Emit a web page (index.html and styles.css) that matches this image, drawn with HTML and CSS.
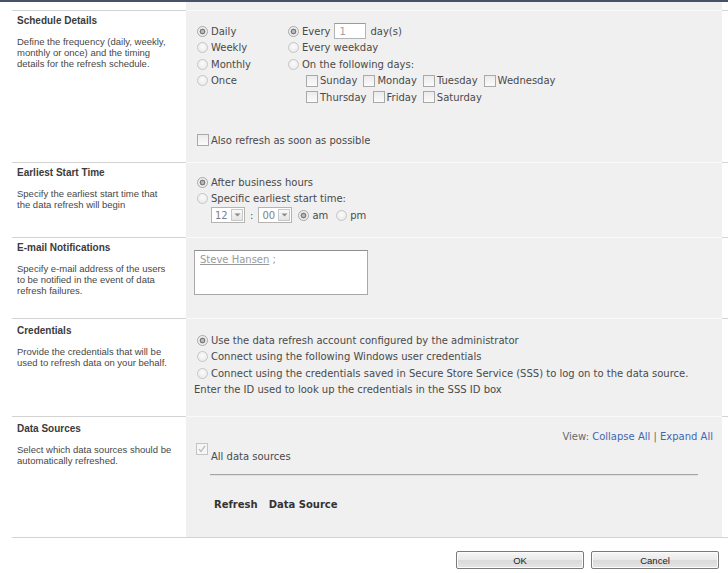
FILE: index.html
```html
<!DOCTYPE html>
<html>
<head>
<meta charset="utf-8">
<title>Refresh Schedule</title>
<link rel="stylesheet" href="styles.css">
</head>
<body>
<div class="topbar"></div>
<div class="form">
  <div class="sec sec-top"><div class="left"></div><div class="right"></div><div class="edge"></div></div>

  <div class="sec s1">
    <div class="left">
      <div class="title">Schedule Details</div>
      <div class="desc">Define the frequency (daily, weekly,<br>monthly or once) and the timing<br>details for the refresh schedule.</div>
    </div>
    <div class="right">
      <div class="freq">
        <div class="colA">
          <div class="row"><span class="radio on"></span>Daily</div>
          <div class="row"><span class="radio"></span>Weekly</div>
          <div class="row"><span class="radio"></span>Monthly</div>
          <div class="row"><span class="radio"></span>Once</div>
        </div>
        <div class="colB">
          <div class="row"><span class="radio on"></span>Every<span class="num">1</span>day(s)</div>
          <div class="row"><span class="radio"></span>Every weekday</div>
          <div class="row"><span class="radio"></span>On the following days:</div>
          <div class="row days">
            <span class="day"><span class="cb"></span>Sunday</span>
            <span class="day"><span class="cb"></span>Monday</span>
            <span class="day"><span class="cb"></span>Tuesday</span>
            <span class="day"><span class="cb"></span>Wednesday</span>
          </div>
          <div class="row days">
            <span class="day"><span class="cb"></span>Thursday</span>
            <span class="day"><span class="cb"></span>Friday</span>
            <span class="day"><span class="cb"></span>Saturday</span>
          </div>
        </div>
      </div>
      <div class="row also"><span class="cb cb-l"></span>Also refresh as soon as possible</div>
    </div>
    <div class="edge"></div>
  </div>

  <div class="sec s2">
    <div class="left">
      <div class="title">Earliest Start Time</div>
      <div class="desc">Specify the earliest start time that<br>the data refresh will begin</div>
    </div>
    <div class="right">
      <div class="row"><span class="radio on"></span>After business hours</div>
      <div class="row"><span class="radio"></span>Specific earliest start time:</div>
      <div class="row time">
        <span class="sel"><span class="val">12</span><span class="drop"><svg width="7" height="4" viewBox="0 0 7 4"><path d="M0.5 0.5 L3.5 3.5 L6.5 0.5 Z" fill="#8a8a8a"/></svg></span></span>
        <span class="colon">:</span>
        <span class="sel"><span class="val">00</span><span class="drop"><svg width="7" height="4" viewBox="0 0 7 4"><path d="M0.5 0.5 L3.5 3.5 L6.5 0.5 Z" fill="#8a8a8a"/></svg></span></span>
        <span class="radio on"></span><span class="ampm">am</span>
        <span class="radio"></span><span class="ampm">pm</span>
      </div>
    </div>
    <div class="edge"></div>
  </div>

  <div class="sec s3">
    <div class="left">
      <div class="title">E-mail Notifications</div>
      <div class="desc">Specify e-mail address of the users<br>to be notified in the event of data<br>refresh failures.</div>
    </div>
    <div class="right">
      <div class="people"><span class="person">Steve Hansen</span> ;</div>
    </div>
    <div class="edge"></div>
  </div>

  <div class="sec s4">
    <div class="left">
      <div class="title">Credentials</div>
      <div class="desc">Provide the credentials that will be<br>used to refresh data on your behalf.</div>
    </div>
    <div class="right">
      <div class="row"><span class="radio on"></span>Use the data refresh account configured by the administrator</div>
      <div class="row"><span class="radio"></span>Connect using the following Windows user credentials</div>
      <div class="row"><span class="radio"></span>Connect using the credentials saved in Secure Store Service (SSS) to log on to the data source.</div>
      <div class="row plain">Enter the ID used to look up the credentials in the SSS ID box</div>
    </div>
    <div class="edge"></div>
  </div>

  <div class="sec s5">
    <div class="left">
      <div class="title">Data Sources</div>
      <div class="desc">Select which data sources should be<br>automatically refreshed.</div>
    </div>
    <div class="right">
      <div class="view">View: <a class="lnk">Collapse All</a> | <a class="lnk">Expand All</a></div>
      <div class="allds"><span class="cb cb-chk"><svg width="10" height="10" viewBox="0 0 10 10"><path d="M2 5.2 L4 7.5 L8 1.8" fill="none" stroke="#b8b8b8" stroke-width="1.2"/></svg></span><span class="alltxt">All data sources</span></div>
      <div class="rule"></div>
      <div class="heads"><span>Refresh</span><span>Data Source</span></div>
    </div>
    <div class="edge"></div>
  </div>

  <div class="foot">
    <button class="btn">OK</button>
    <button class="btn">Cancel</button>
  </div>
</div>
</body>
</html>
```

FILE: styles.css
```css
html, body {
  margin: 0;
  padding: 0;
  background: #ffffff;
}
body {
  font-family: "DejaVu Sans", Verdana, sans-serif;
  font-size: 10px;
  color: #4a4a4a;
}
.topbar {
  height: 2px;
  background: #465366;
}
.form {
  margin-left: 12px;
}
.sec {
  display: grid;
  grid-template-columns: 174px 536px 6px;
  box-sizing: border-box;
  border-top: 1px solid #d3d3d3;
}
.sec-top {
  height: 8px;
  border-top: none;
}
.s1 { height: 152px; }
.s2 { height: 75px; }
.s3 { height: 81px; }
.s4 { height: 98px; }
.s5 { height: 121px; }
.left {
  background: #ffffff;
  padding: 4px 0 0 5px;
  font-family: "Liberation Sans", Arial, sans-serif;
}
.s4 .left { padding-top: 6px; }
.s5 .left { padding-top: 6px; }
.right {
  background: #f0f0f0;
  border-top: 1px solid #fafafa;
  margin-top: -1px;
  padding: 0 9px 0 8px;
  box-sizing: border-box;
}
.sec-top .right { border-top: none; margin-top: 0; }
.edge { background: #ffffff; }
.title {
  font-weight: bold;
  font-size: 10px;
  line-height: 12px;
  color: #3b3b3b;
  margin-bottom: 9px;
}
.desc {
  font-size: 9.5px;
  line-height: 11px;
  color: #474747;
}
.row {
  height: 16.5px;
  display: flex;
  align-items: center;
  white-space: nowrap;
}
.radio {
  display: inline-block;
  box-sizing: border-box;
  width: 11px;
  height: 11px;
  border-radius: 50%;
  border: 1px solid #c6c6c6;
  background: radial-gradient(circle at 50% 40%, #fbfbfb 0, #e6e6e6 100%);
  margin: 0 3px;
  flex: none;
}
.radio.on {
  border-color: #a9a9a9;
  background: radial-gradient(circle, #b9b9b9 0, #b9b9b9 1.3px, #7b7b7b 1.8px, #7b7b7b 2.6px, #ececec 3.2px, #f4f4f4 100%);
}
.cb {
  display: inline-block;
  box-sizing: border-box;
  width: 12px;
  height: 12px;
  border: 1px solid #a9a9a9;
  background: linear-gradient(#ebebeb, #fbfbfb);
  margin-right: 2px;
  flex: none;
}
.s1 .right { padding-top: 12px; }
.freq { display: flex; }
.colA { width: 91px; }
.num {
  display: inline-block;
  box-sizing: border-box;
  width: 32px;
  height: 16px;
  border: 1px solid #b4b4b4;
  border-top-color: #9a9a9a;
  background: #ffffff;
  color: #a0a0a0;
  padding: 2px 0 0 4px;
  margin: 0 4px 0 4px;
  line-height: 11px;
}
.days { padding-left: 21px; }
.day { display: inline-flex; align-items: center; margin-right: 6px; }
.also { margin-top: 26.5px; padding-left: 3px; }
.cb-l { margin-right: 2px; }

.s2 .right { padding-top: 11px; }
.time { padding-left: 17px; }
.sel {
  display: inline-flex;
  box-sizing: border-box;
  width: 34px;
  height: 16px;
  border: 1px solid #b4b4b4;
  background: #ffffff;
  align-items: center;
  justify-content: space-between;
  padding: 0 1px 0 3px;
}
.sel .val { color: #808080; }
.drop {
  display: inline-flex;
  align-items: center;
  justify-content: center;
  box-sizing: border-box;
  width: 12px;
  height: 12px;
  border: 1px solid #c8c8c8;
  background: linear-gradient(#fafafa, #e4e4e4);
}
.colon { margin: 0 5px 0 5px; color: #555; }
.time .radio { margin: 0 3px 0 6px; }
.ampm { margin-right: 2px; }

.s3 .right { padding-top: 12px; }
.people {
  box-sizing: border-box;
  width: 174px;
  height: 45px;
  border: 1px solid #a8a8a8;
  border-top-color: #8f8f8f;
  background: #ffffff;
  padding: 3px 5px;
  color: #9a9a9a;
  line-height: 12px;
}
.person { text-decoration: underline; }

.s4 .right { padding-top: 13px; }
.plain { padding-left: 0; }

.s5 .right { padding-top: 14px; }
.view {
  text-align: right;
  line-height: 12px;
  height: 12px;
  color: #6a6a6a;
}
.lnk { color: #3f67b1; text-decoration: none; }
.allds {
  display: flex;
  align-items: flex-start;
  padding-left: 2px;
  height: 20px;
}
.cb-chk {
  border-color: #c4c4c4;
  background: #f6f6f6;
  display: inline-flex;
  align-items: center;
  justify-content: center;
  margin-right: 3px;
}
.alltxt { padding-top: 8px; line-height: 12px; }
.rule {
  margin: 11px 15px 0 16px;
  height: 1px;
  background: #a4a4a4;
  border-bottom: 1px solid #e2e2e2;
}
.heads {
  margin: 23px 0 0 20px;
  font-weight: bold;
  font-size: 10px;
  line-height: 12px;
  color: #333333;
}
.heads span:first-child { margin-right: 11px; }

.foot {
  border-top: 1px solid #d3d3d3;
  display: flex;
  justify-content: flex-end;
  gap: 7px;
  padding: 13px 9px 0 0;
}
.btn {
  box-sizing: border-box;
  width: 128px;
  height: 18px;
  border: 1px solid #7a7a7a;
  border-radius: 2px;
  background: linear-gradient(#f6f6f6 0%, #e9e9e9 50%, #dadada 51%, #e4e4e4 100%);
  font-family: "Liberation Sans", Arial, sans-serif;
  font-size: 9.5px;
  color: #222222;
  padding: 0;
  box-shadow: inset 0 0 0 1px #fcfcfc;
}
```
